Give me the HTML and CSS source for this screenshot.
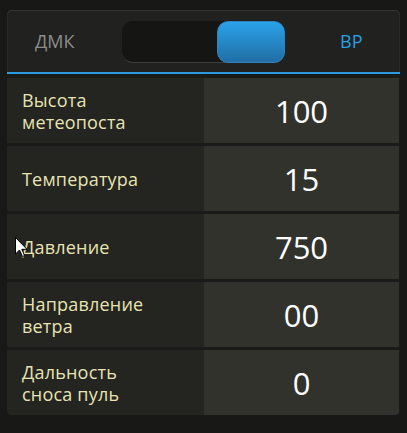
FILE: index.html
```html
<!DOCTYPE html>
<html lang="ru">
<head>
<meta charset="utf-8">
<link rel="stylesheet" href="styles.css">
</head>
<body>
<div class="card">
  <div class="header">
    <div class="mode mode-left">ДМК</div>
    <div class="toggle"><div class="knob"></div></div>
    <div class="mode mode-right">ВР</div>
  </div>
  <div class="rows">
    <div class="row"><div class="label">Высота<br>метеопоста</div><div class="value">100</div></div>
    <div class="row"><div class="label">Температура</div><div class="value">15</div></div>
    <div class="row"><div class="label">Давление</div><div class="value">750</div></div>
    <div class="row"><div class="label">Направление<br>ветра</div><div class="value">00</div></div>
    <div class="row"><div class="label">Дальность<br>сноса пуль</div><div class="value">0</div></div>
  </div>
</div>
<svg class="cursor" width="13" height="21" viewBox="0 0 13 21"><path d="M0.5 0.5 L0.5 17 L4.5 13 L7.5 19.5 L9.5 18.5 L6.8 12.3 L12 12.3 Z" fill="#fff" stroke="#000" stroke-width="1"/></svg>
</body>
</html>
```
FILE: styles.css
```css
html, body {
  margin: 0;
  padding: 0;
  background: #181817;
}
body {
  padding: 10px 7px 0 7px;
  font-family: "Open Sans", "Noto Sans", sans-serif;
  position: relative;
  height: 433px;
  box-sizing: border-box;
}
.card {
  width: 393px;
  background: #212120;
  border-radius: 5px;
  box-shadow: inset 0 1px 0 #353533, inset 1px 0 0 #2a2a28, inset -1px 0 0 #2a2a28;
  overflow: hidden;
}
.header {
  display: flex;
  align-items: center;
  border-bottom: 2px solid #2b9be0;
  box-sizing: border-box;
  height: 64px;
}
.mode {
  font-size: 18px;
}
.mode-left {
  width: 115px;
  box-sizing: border-box;
  padding-left: 28px;
  color: #8c8c8a;
}
.mode-right {
  padding-left: 55px;
  color: #2b9fe3;
}
.toggle {
  width: 163px;
  height: 42px;
  box-sizing: border-box;
  background: #151513;
  border-radius: 11px;
  border-bottom: 1px solid #3c3c3a;
  display: flex;
  justify-content: flex-end;
  margin-top: 1px;
}
.knob {
  width: 68px;
  height: 42px;
  box-sizing: border-box;
  border-radius: 11px;
  background: linear-gradient(#2aa2ea, #216ea4);
  border: 1px solid #2f84bd;
}
.rows {
  display: flex;
  flex-direction: column;
  gap: 3px;
  padding-top: 4px;
  background: #1a1a18;
}
.row {
  height: 65px;
  display: grid;
  grid-template-columns: 197px 195px;
}
.label {
  background: #242420;
  color: #e7e3b3;
  font-size: 18px;
  line-height: 22px;
  padding-left: 15px;
  letter-spacing: 0.2px;
  display: flex;
  align-items: center;
}
.value {
  background: #31322c;
  color: #ffffff;
  font-size: 31px;
  display: flex;
  align-items: center;
  justify-content: center;
}
.cursor {
  position: absolute;
  left: 15px;
  top: 237px;
}
```
